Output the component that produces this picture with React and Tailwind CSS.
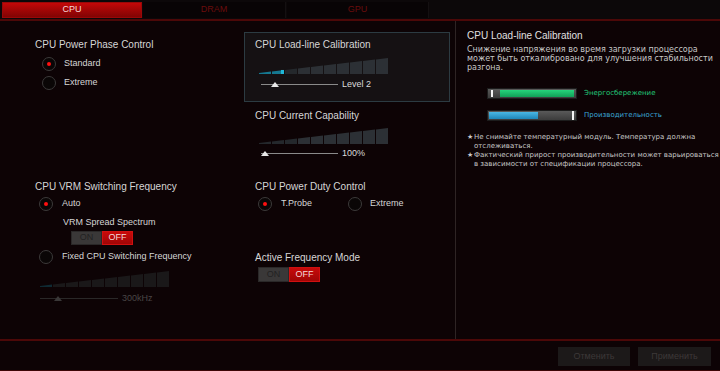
import React from "react";

function Radio({ checked }) {
  return (
    <div className="w-[14px] h-[14px] rounded-full border border-[#3c3a3a] bg-[#0a0606] flex items-center justify-center shrink-0">
      {checked && <div className="w-[4px] h-[4px] rounded-full bg-[#ff1010]" />}
    </div>
  );
}

function Bars({ filled = 0, dim = false }) {
  const W = 130, H = 17, n = 10, cw = 13;
  const top = (x) => 16 - 15 * (x / 129);
  return (
    <svg width={W} height={H} viewBox={`0 0 ${W} ${H}`} className="block">
      {Array.from({ length: n }, (_, i) => {
        const x0 = i * cw, x1 = x0 + cw - 1;
        const shade = dim ? "#1a1819" : i < 3 ? "#24282c" : "#2c3035";
        const fill = i < filled ? (dim ? "#0f2a33" : "#157890") : shade;
        return (
          <polygon
            key={i}
            points={`${x0},${H} ${x0},${top(x0)} ${x1},${top(x1)} ${x1},${H}`}
            fill={fill}
          />
        );
      })}
      {filled > 0 && !dim && (
        <rect x={filled * cw - 4} y={top(filled * cw) } width="3" height={H - top(filled * cw)} fill="#20b8d8" />
      )}
    </svg>
  );
}

function Slider({ pos, label, dim = false, width = 77 }) {
  return (
    <div className="flex items-center h-[10px]">
      <div className="relative h-[10px] flex items-center" style={{ width }}>
        <div className={`w-full h-[1px] ${dim ? "bg-[#2a2828]" : "bg-[#8a8a8a]"}`} />
        <svg
          width="8"
          height="5"
          viewBox="0 0 8 5"
          className="absolute top-[3px]"
          style={{ left: pos }}
        >
          <polygon points="0,5 4,0 8,5" fill={dim ? "#3a3838" : "#e8e8e8"} />
        </svg>
      </div>
      <span className={`ml-[4px] text-[9px] leading-[10px] ${dim ? "text-[#4a4646]" : "text-[#dcdcdc]"}`}>
        {label}
      </span>
    </div>
  );
}

function Toggle({ w = 31, h = 14 }) {
  return (
    <div className="flex">
      <div
        className="flex items-center justify-center bg-[#3a3838] border border-[#2a2828] text-[#222] text-[9px]"
        style={{ width: w, height: h }}
      >
        ON
      </div>
      <div
        className="flex items-center justify-center bg-gradient-to-b from-[#c80a0a] to-[#a00606] border border-[#d01010] text-[#f2d8d8] text-[9px]"
        style={{ width: w, height: h }}
      >
        OFF
      </div>
    </div>
  );
}

export default function App() {
  const body = "text-[#d6d6d6]";
  return (
    <div
      className="w-[720px] h-[371px] bg-[#0d0305] flex flex-col overflow-hidden"
      style={{ fontFamily: '"Liberation Sans", Arial, sans-serif' }}
    >
      {/* Tabs */}
      <div className="h-[19px] flex items-start pt-[2px] pl-[2px] gap-[1px] bg-[#0c0809]">
        <div className="w-[140px] h-[16px] bg-gradient-to-b from-[#c40808] to-[#820404] border border-[#9a0808] flex items-center justify-center text-[9px] text-[#f4d8d8]">
          CPU
        </div>
        <div className="w-[143px] h-[16px] bg-[#080405] border-r border-[#141011] flex items-center justify-center text-[9px] text-[#6a0c0c]">
          DRAM
        </div>
        <div className="w-[142px] h-[16px] bg-[#080405] border-r border-[#141011] flex items-center justify-center text-[9px] text-[#6a0c0c]">
          GPU
        </div>
      </div>
      <div className="h-[2px] bg-[#4c0808]" />

      {/* Main */}
      <div className="h-[318px] flex">
        <div className="w-[456px] border-r border-[#2e2424] flex">
          {/* Column 1 */}
          <div className="w-[244px] pl-[35px] flex flex-col">
            <div className="h-[160px] flex flex-col">
              <div className={`mt-[18px] h-[12px] leading-[12px] text-[10px] ${body}`}>
                CPU Power Phase Control
              </div>
              <div className="mt-[3px] h-[19px] flex items-center pl-[7px]">
                <Radio checked />
                <span className={`ml-[8px] text-[9px] ${body}`}>Standard</span>
              </div>
              <div className="h-[19px] flex items-center pl-[7px]">
                <Radio />
                <span className={`ml-[8px] text-[9px] ${body}`}>Extreme</span>
              </div>
            </div>
            <div className="flex flex-col">
              <div className={`h-[12px] leading-[12px] text-[10px] ${body}`}>
                CPU VRM Switching Frequency
              </div>
              <div className="mt-[2px] h-[18px] flex items-center pl-[4px]">
                <Radio checked />
                <span className={`ml-[9px] text-[9px] ${body}`}>Auto</span>
              </div>
              <div className={`mt-[3px] h-[12px] leading-[12px] pl-[28px] text-[9px] ${body}`}>
                VRM Spread Spectrum
              </div>
              <div className="mt-[3px] ml-[36px]">
                <Toggle w={31} h={14} />
              </div>
              <div className="mt-[3px] h-[18px] flex items-center pl-[4px]">
                <Radio />
                <span className={`ml-[9px] text-[9px] ${body}`}>Fixed CPU Switching Frequency</span>
              </div>
              <div className="mt-[4px] ml-[5px]">
                <Bars filled={1} dim />
              </div>
              <div className="mt-[6px] ml-[5px]">
                <Slider pos={14} label="300kHz" dim width={78} />
              </div>
            </div>
          </div>

          {/* Column 2 */}
          <div className="w-[207px] flex flex-col">
            <div className="h-[160px] flex flex-col">
              <div className="mt-[11px] h-[70px] w-[206px] border border-[#2c3b42] bg-[#151113] pl-[10px] flex flex-col">
                <div className={`mt-[6px] h-[12px] leading-[12px] text-[10px] ${body}`}>
                  CPU Load-line Calibration
                </div>
                <div className="mt-[6px] ml-[4px]">
                  <Bars filled={2} />
                </div>
                <div className="mt-[5px] ml-[6px]">
                  <Slider pos={10} label="Level 2" />
                </div>
              </div>
              <div className={`mt-[8px] pl-[11px] h-[12px] leading-[12px] text-[10px] ${body}`}>
                CPU Current Capability
              </div>
              <div className="mt-[5px] ml-[15px]">
                <Bars />
              </div>
              <div className="mt-[4px] ml-[17px]">
                <Slider pos={0} label="100%" />
              </div>
            </div>
            <div className="flex flex-col pl-[11px]">
              <div className={`h-[12px] leading-[12px] text-[10px] ${body}`}>
                CPU Power Duty Control
              </div>
              <div className="mt-[2px] h-[18px] flex items-center pl-[3px]">
                <div className="w-[90px] flex items-center">
                  <Radio checked />
                  <span className={`ml-[9px] text-[9px] ${body}`}>T.Probe</span>
                </div>
                <Radio />
                <span className={`ml-[8px] text-[9px] ${body}`}>Extreme</span>
              </div>
              <div className={`mt-[39px] h-[12px] leading-[12px] text-[10px] ${body}`}>
                Active Frequency Mode
              </div>
              <div className="mt-[3px] ml-[3px]">
                <Toggle w={31} h={15} />
              </div>
            </div>
          </div>
        </div>

        {/* Right panel */}
        <div className="flex-1 pl-[11px] flex flex-col">
          <div className="mt-[9px] h-[12px] leading-[12px] text-[10px] text-[#e0e0e0]">
            CPU Load-line Calibration
          </div>
          <div
            className="mt-[3px] text-[8px] leading-[9px] text-[#c8c8c8] whitespace-nowrap"
            style={{ fontFamily: '"DejaVu Sans", Verdana, sans-serif' }}
          >
            Снижение напряжения во время загрузки процессора
            <br />
            может быть откалибровано для улучшения стабильности
            <br />
            разгона.
          </div>
          <div
            className="mt-[16px] ml-[20px] flex items-center"
            style={{ fontFamily: '"DejaVu Sans", Verdana, sans-serif' }}
          >
            <div className="w-[90px] h-[11px] bg-gradient-to-b from-[#5a5a5a] to-[#3c3c3c] border border-[#1c1c1c] relative flex items-center">
              <div className="absolute left-[3px] top-[1px] w-[2px] h-[7px] bg-[#f4f4f4]" />
              <div className="absolute left-[12px] right-[2px] top-[1px] h-[7px] bg-gradient-to-b from-[#26d47c] to-[#10a058]" />
            </div>
            <span className="ml-[7px] text-[7px] text-[#22c878]">Энергосбережение</span>
          </div>
          <div
            className="mt-[11px] ml-[20px] flex items-center"
            style={{ fontFamily: '"DejaVu Sans", Verdana, sans-serif' }}
          >
            <div className="w-[90px] h-[11px] bg-gradient-to-b from-[#5a5a5a] to-[#3c3c3c] border border-[#1c1c1c] relative flex items-center">
              <div className="absolute left-[1px] top-[1px] w-[49px] h-[7px] bg-gradient-to-b from-[#4ab8e4] to-[#1d86b8]" />
              <div className="absolute left-[84px] top-[0px] w-[2px] h-[9px] bg-[#f4f4f4]" />
            </div>
            <span className="ml-[7px] text-[7px] text-[#3aa6d6]">Производительность</span>
          </div>
          <div
            className="mt-[12px] flex flex-col gap-[1px] text-[7px] leading-[8.5px] text-[#c8c8c8] whitespace-nowrap"
            style={{ fontFamily: '"DejaVu Sans", Verdana, sans-serif' }}
          >
            <div className="flex">
              <span className="w-[7px] shrink-0">★</span>
              <span>
                Не снимайте температурный модуль. Температура должна
                <br />
                отслеживаться.
              </span>
            </div>
            <div className="flex">
              <span className="w-[7px] shrink-0">★</span>
              <span>
                Фактический прирост производительности может варьироваться
                <br />
                в зависимости от спецификации процессора.
              </span>
            </div>
          </div>
        </div>
      </div>

      <div className="h-[2px] bg-[#4c0808]" />
      {/* Bottom */}
      <div className="h-[29px] flex justify-end items-start pt-[6px] pr-[9px] gap-[8px]">
        <div className="w-[72px] h-[19px] bg-[#1c1919] flex items-center justify-center text-[9px] text-[#3c3838]">
          Отменить
        </div>
        <div className="w-[73px] h-[19px] bg-[#1c1919] flex items-center justify-center text-[9px] text-[#3c3838]">
          Применить
        </div>
      </div>
      <div className="h-[1px] bg-[#3c0606]" />
    </div>
  );
}
